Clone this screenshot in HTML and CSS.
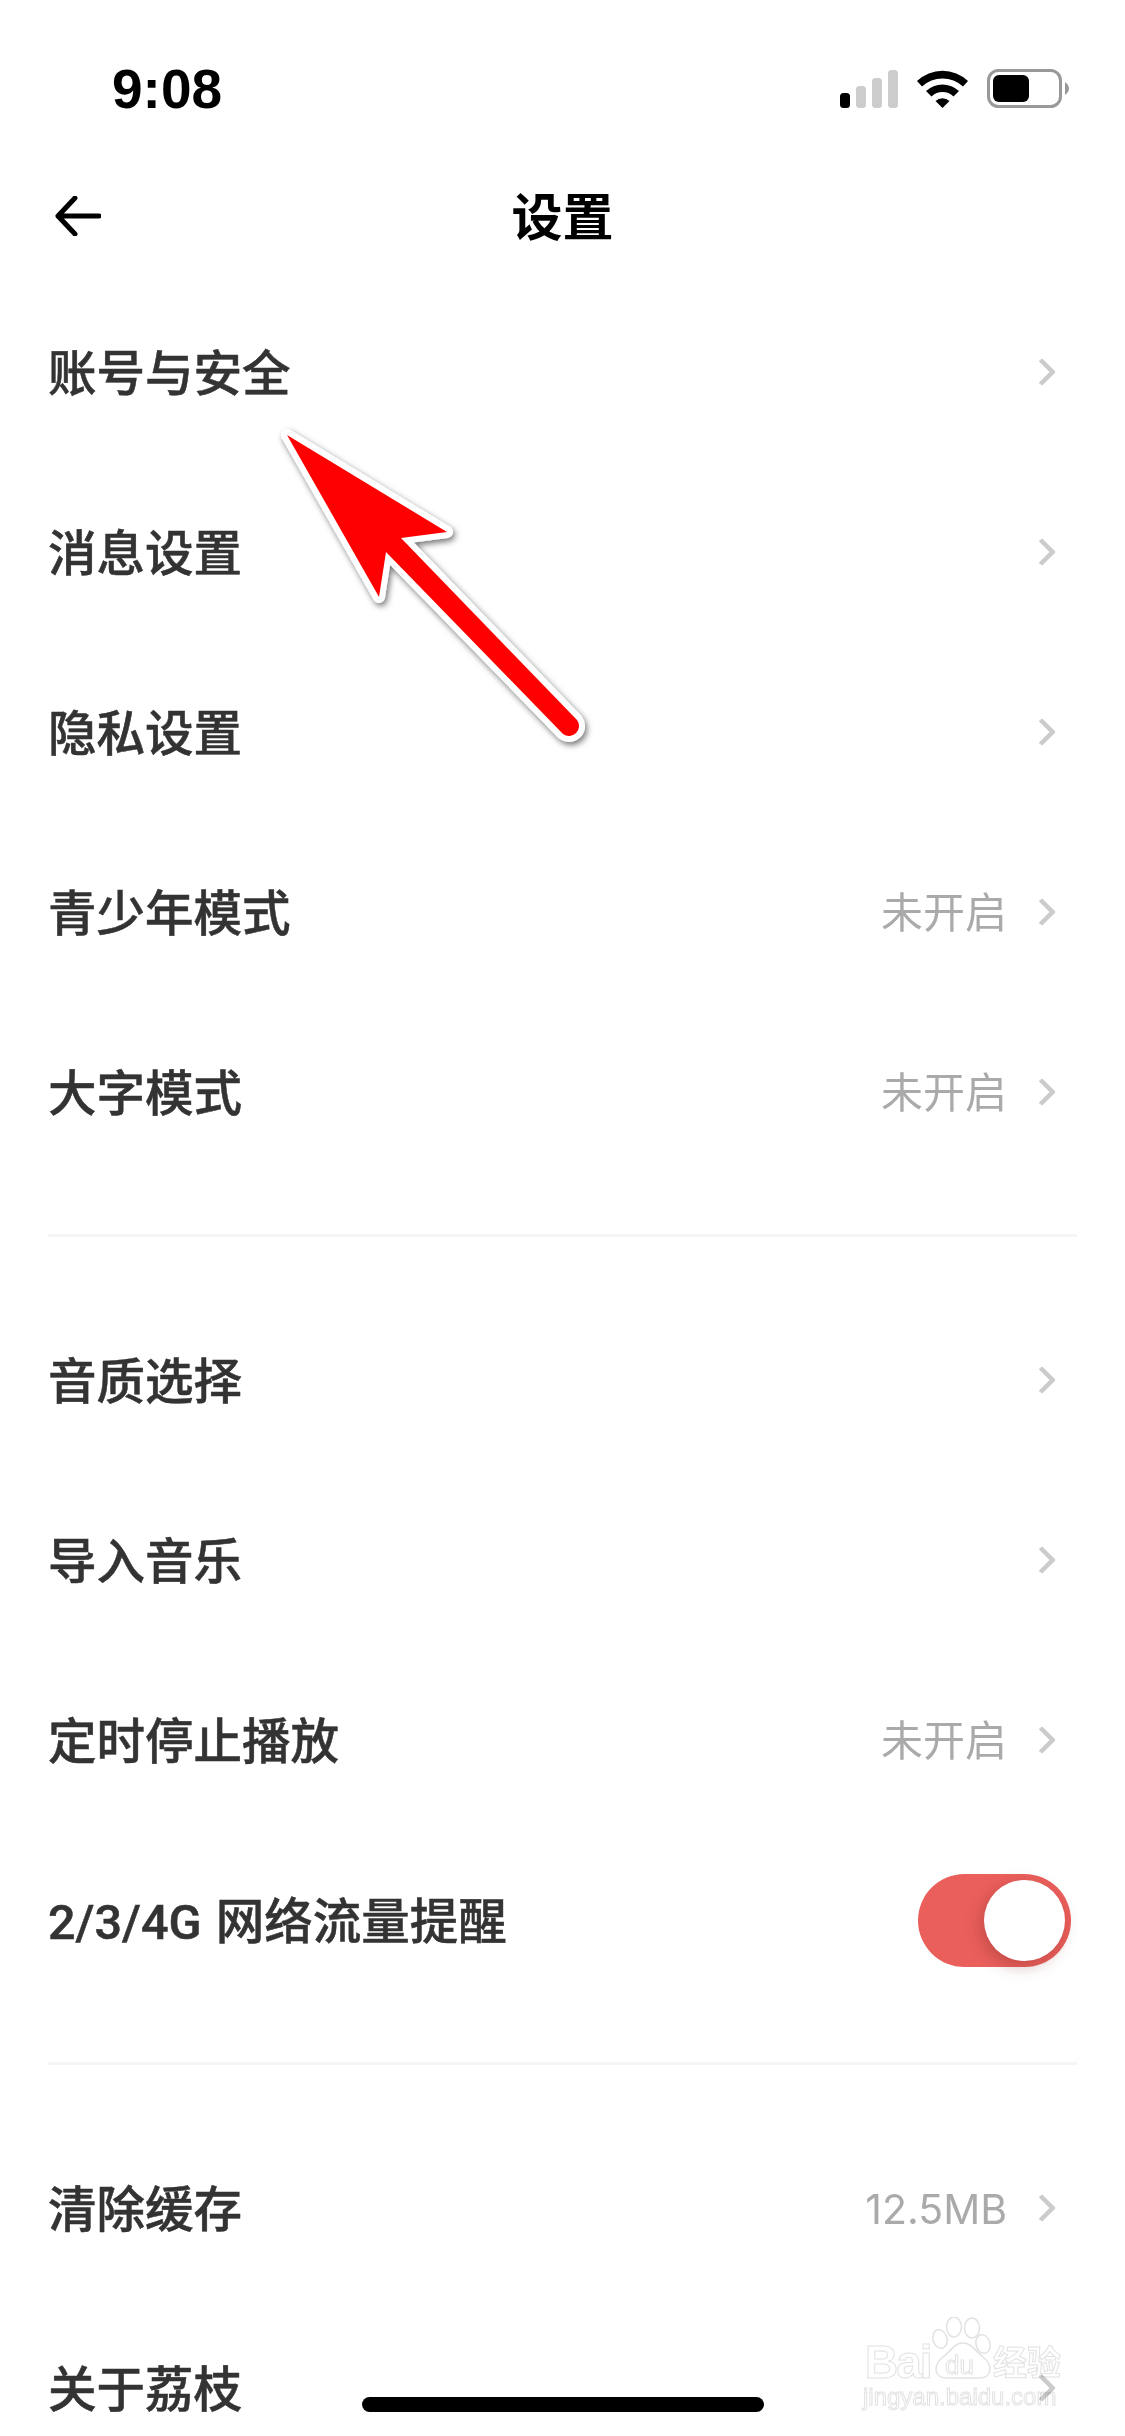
FILE: index.html
```html
<!DOCTYPE html>
<html lang="zh-CN">
<head>
    <meta charset="UTF-8">
    <meta name="viewport" content="width=device-width, initial-scale=1.0">
    <title>设置</title>
    <link rel="stylesheet" href="styles.css">
</head>
<body>
<div class="screen">
    <div class="status-bar">
        <span class="time">9:08</span>
        <svg class="status-icons" width="235" height="44" viewBox="0 0 235 44">
            <rect x="6" y="25" width="10" height="15" rx="3.5" fill="#000"/>
            <rect x="22" y="18" width="10" height="22" rx="3.5" fill="#ccc"/>
            <rect x="38" y="10" width="10" height="30" rx="3.5" fill="#ccc"/>
            <rect x="54" y="2" width="10" height="38" rx="3.5" fill="#ccc"/>
            <path d="M83 13 A37 37 0 0 1 134 13 L129 18.500 A30 30 0 0 0 88 18.500 Z" fill="#000"/>
            <path d="M92 23 A24 24 0 0 1 125 23 L119.500 28.500 A16 16 0 0 0 97.500 28.500 Z" fill="#000"/>
            <path d="M101.500 33 A10 10 0 0 1 115.500 33 L108.500 40 Z" fill="#000"/>
            <rect x="154.500" y="2.500" width="72" height="36" rx="10" fill="none" stroke="#999" stroke-width="3"/>
            <rect x="159" y="7" width="36" height="27" rx="6" fill="#000"/>
            <path d="M231 14 Q235 17 235 20.500 Q235 24 231 27 Z" fill="#999"/>
        </svg>
    </div>
    <div class="nav-bar">
        <svg class="back" width="46" height="40" viewBox="0 0 46 40">
            <path d="M20 2 L3 20 L20 38 M3 20 H44" fill="none" stroke="#000" stroke-width="5" stroke-linecap="round" stroke-linejoin="round"/>
        </svg>
        <h1 class="title">设置</h1>
    </div>

    <div class="group">
        <div class="row"><span class="label">账号与安全</span><span class="chevron"></span></div>
        <div class="row"><span class="label">消息设置</span><span class="chevron"></span></div>
        <div class="row"><span class="label">隐私设置</span><span class="chevron"></span></div>
        <div class="row"><span class="label">青少年模式</span><span class="value">未开启</span><span class="chevron"></span></div>
        <div class="row"><span class="label">大字模式</span><span class="value">未开启</span><span class="chevron"></span></div>
    </div>
    <div class="group">
        <div class="row"><span class="label">音质选择</span><span class="chevron"></span></div>
        <div class="row"><span class="label">导入音乐</span><span class="chevron"></span></div>
        <div class="row"><span class="label">定时停止播放</span><span class="value">未开启</span><span class="chevron"></span></div>
        <div class="row"><span class="label">2/3/4G 网络流量提醒</span><span class="switch"><span class="knob"></span></span></div>
    </div>
    <div class="group">
        <div class="row"><span class="label">清除缓存</span><span class="value value-num">12.5MB</span><span class="chevron"></span></div>
        <div class="row"><span class="label">关于荔枝</span><span class="chevron"></span></div>
    </div>

    <!-- annotation over the list -->
    <svg class="pointer" width="340" height="350" viewBox="270 420 340 350">
        <defs>
            <filter id="soft" x="-10%" y="-10%" width="120%" height="120%">
                <feDropShadow dx="2" dy="3" stdDeviation="3" flood-color="#000" flood-opacity="0.55"/>
            </filter>
        </defs>
        <path id="arrow" d="M287 435 L447 532 L401 538 L577 720 A10 10 0 0 1 563 734 L386 552 L379 597 Z" fill="#f00" stroke="#fff" stroke-width="12" stroke-linejoin="round" paint-order="stroke" filter="url(#soft)"/>
    </svg>

    <div class="watermark">
        <svg class="paw" width="62" height="63" viewBox="0 0 62 63">
            <g fill="#fff" stroke="#e2e2e2" stroke-width="1.500">
                <ellipse cx="8" cy="22" rx="7" ry="9.500" transform="rotate(-15 8 22)"/>
                <ellipse cx="22" cy="10" rx="7.500" ry="10"/>
                <ellipse cx="40" cy="11" rx="7.500" ry="10"/>
                <ellipse cx="51" cy="27" rx="7" ry="9.500" transform="rotate(-15 51 27)"/>
                <path d="M31 26 C40 26 43 34 51 40 C61 48 61 61 46 61 C38 61 24 61 16 61 C1 61 1 48 11 40 C19 34 22 26 31 26 Z"/>
            </g>
        </svg>
        <span class="wm-bai">Bai</span>
        <span class="wm-du">du</span>
        <span class="wm-jy">经验</span>
        <span class="wm-url">jingyan.baidu.com</span>
    </div>

    <div class="home-bar"></div>
</div>
</body>
</html>
```

FILE: styles.css
```css
html, body {
    margin: 0;
    padding: 0;
    background-color: #fff;
}
.screen {
    position: relative;
    width: 1125px;
    height: 2436px;
    overflow: hidden;
    background: #fff;
    font-family: Roboto, "Noto Sans CJK SC", sans-serif;
    color: #333;
}
.status-bar {
    height: 136px;
    box-sizing: border-box;
    padding: 66px 56px 0 112px;
    display: flex;
    justify-content: space-between;
    align-items: flex-start;
}
.time {
    font-family: "Liberation Sans", sans-serif;
    font-size: 55px;
    font-weight: 700;
    line-height: 46px;
    color: #000;
}
.status-icons {
    display: block;
    margin-top: 2px;
}
.nav-bar {
    position: relative;
    height: 146px;
    display: flex;
    align-items: center;
    justify-content: center;
}
.back {
    position: absolute;
    left: 55px;
    top: 60px;
}
.title {
    margin: 0;
    padding-top: 18px;
    font-size: 51px;
    font-weight: 700;
    color: #000;
    line-height: 1;
}
.group {
    margin: 0 48px 53px;
    padding-bottom: 52px;
    border-bottom: 3px solid #f5f5f5;
}
.row {
    height: 180px;
    display: flex;
    align-items: center;
}
.label {
    flex: 1;
    padding-top: 6px;
    font-size: 48.500px;
    font-weight: 500;
    line-height: 1;
    word-spacing: 2px;
    color: #333;
    -webkit-text-stroke: 0.500px #333;
}
.value {
    padding-top: 3px;
    font-size: 42px;
    color: #aaa;
    line-height: 1;
    margin-right: 25px;
}
.value-num {
    font-family: Inter, sans-serif;
    font-size: 41px;
}
.chevron {
    width: 20px;
    height: 20px;
    box-sizing: border-box;
    border-top: 5.500px solid #ccc;
    border-right: 5.500px solid #ccc;
    border-radius: 2px;
    transform: rotate(45deg);
    margin-right: 25px;
}
.switch {
    width: 153px;
    height: 93px;
    box-sizing: border-box;
    padding: 6px;
    margin-right: 6px;
    border-radius: 47px;
    background: #ea5f5b;
    display: flex;
    justify-content: flex-end;
    align-items: center;
}
.knob {
    width: 81px;
    height: 81px;
    border-radius: 50%;
    background: #fff;
    box-shadow: -3px 5px 16px rgba(120, 40, 40, 0.35);
}
.pointer {
    position: absolute;
    left: 270px;
    top: 420px;
}
.watermark {
    position: absolute;
    left: 860px;
    top: 2316px;
    width: 206px;
    height: 96px;
    color: #fff;
    -webkit-text-stroke: 1px #e2e2e2;
    font-family: "Liberation Sans", sans-serif;
    mix-blend-mode: multiply;
}
.watermark span {
    position: absolute;
    white-space: nowrap;
}
.paw {
    position: absolute;
    left: 72px;
    top: 1px;
}
.wm-bai {
    left: 5px;
    top: 23px;
    font-size: 46px;
    font-weight: 700;
    line-height: 46px;
    letter-spacing: -2px;
}
.wm-du {
    left: 85px;
    top: 36px;
    font-size: 26px;
    line-height: 26px;
}
.wm-jy {
    left: 133px;
    top: 28px;
    font-family: "Noto Sans CJK SC", sans-serif;
    font-size: 34px;
    font-weight: 700;
    line-height: 34px;
}
.wm-url {
    left: 3px;
    top: 68px;
    font-size: 24px;
    line-height: 26px;
}
.home-bar {
    position: absolute;
    left: 362px;
    bottom: 24px;
    width: 402px;
    height: 15px;
    border-radius: 8px;
    background: #000;
}
```
